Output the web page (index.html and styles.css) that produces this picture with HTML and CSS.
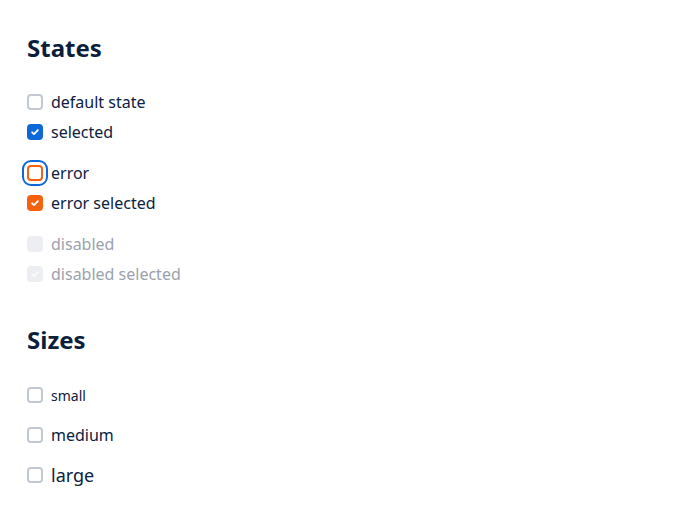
FILE: index.html
```html
<!DOCTYPE html>
<html>
<head>
<meta charset="utf-8">
<link rel="stylesheet" href="styles.css">
</head>
<body>
<main class="page">
  <section class="section">
    <h2 class="title">States</h2>
    <div class="group">
      <label class="item"><span class="box"></span><span class="label">default state</span></label>
      <label class="item"><span class="box checked"><svg viewBox="0 0 16 16"><path d="M4.2 8.4l2.5 2.4 5.1-5.4" /></svg></span><span class="label">selected</span></label>
    </div>
    <div class="group">
      <label class="item"><span class="box error focus"></span><span class="label">error</span></label>
      <label class="item"><span class="box error checked"><svg viewBox="0 0 16 16"><path d="M4.2 8.4l2.5 2.4 5.1-5.4" /></svg></span><span class="label">error selected</span></label>
    </div>
    <div class="group">
      <label class="item disabled"><span class="box"></span><span class="label">disabled</span></label>
      <label class="item disabled"><span class="box checked"><svg viewBox="0 0 16 16"><path d="M4.2 8.4l2.5 2.4 5.1-5.4" /></svg></span><span class="label">disabled selected</span></label>
    </div>
  </section>
  <section class="section sizes">
    <h2 class="title">Sizes</h2>
    <div class="size-list">
      <label class="item sm"><span class="box"></span><span class="label">small</span></label>
      <label class="item md"><span class="box"></span><span class="label">medium</span></label>
      <label class="item lg"><span class="box"></span><span class="label">large</span></label>
    </div>
  </section>
</main>
</body>
</html>
```

FILE: styles.css
```css
html, body {
  margin: 0;
  padding: 0;
  background: #ffffff;
}
body {
  font-family: "Noto Sans", "Open Sans", sans-serif;
  color: #0d2140;
}
.page {
  padding: 32px 27px;
}
.title {
  margin: 0;
  font-size: 24px;
  line-height: 32px;
  font-weight: 700;
  color: #0b1f3d;
}
.group {
  display: flex;
  flex-direction: column;
  gap: 8px;
  margin-top: 19px;
}
.section > .group:first-of-type {
  margin-top: 27px;
}
.item {
  display: flex;
  align-items: center;
  gap: 8px;
  height: 22px;
  font-size: 16px;
}
.box {
  position: relative;
  flex: none;
  box-sizing: border-box;
  width: 16px;
  height: 16px;
  border: 2px solid #c3c9d2;
  border-radius: 4px;
  background: #fff;
  display: flex;
  align-items: center;
  justify-content: center;
}
.box svg {
  width: 16px;
  height: 16px;
  fill: none;
  stroke: #fff;
  stroke-width: 2.4;
  stroke-linecap: round;
  stroke-linejoin: round;
}
.box.checked {
  background: #0f68d8;
  border-color: #0f68d8;
}
.box.error {
  border-color: #f5620f;
}
.box.error.checked {
  background: #f5620f;
}
.box.focus {
  outline: 2px solid #0f68d8;
  outline-offset: 3px;
}
.item.disabled .label {
  color: #9aa2ae;
}
.item.disabled .box {
  background: #eceef1;
  border-color: #eceef1;
}
.item.disabled .box svg {
  stroke: #fbfbfc;
}
.sizes {
  margin-top: 39px;
}
.size-list {
  display: flex;
  flex-direction: column;
  gap: 18px;
  margin-top: 28px;
}
.item.sm { font-size: 14px; }
.item.md { font-size: 16px; }
.item.lg { font-size: 18px; }
```
